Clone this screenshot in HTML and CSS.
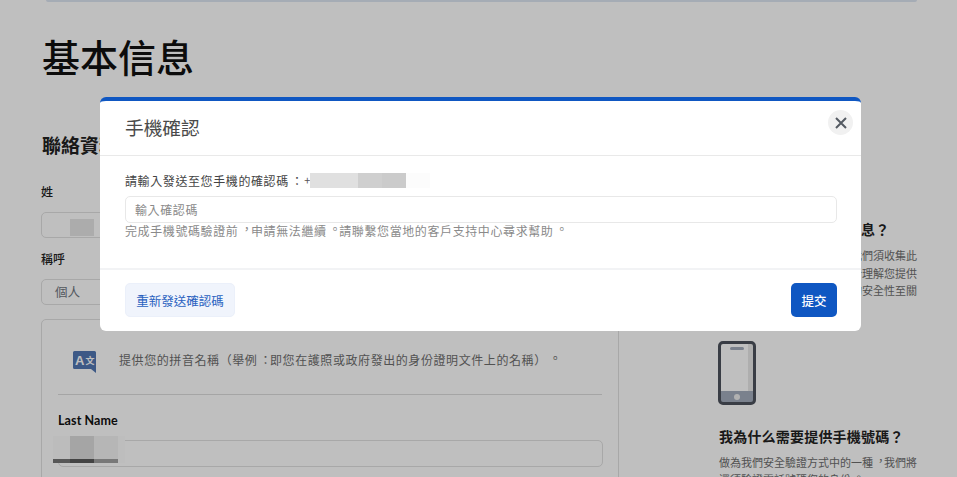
FILE: index.html
```html
<!DOCTYPE html>
<html lang="zh-TW">
<head>
<meta charset="utf-8">
<title>基本信息</title>
<link rel="stylesheet" href="styles.css">
</head>
<body>
<div class="page">
  <div class="topbar"></div>
  <h1 class="title">基本信息</h1>
  <div class="columns">
    <main class="form-col">
      <h2 class="section">聯絡資料</h2>
      <label class="label first">姓</label>
      <div class="field short"></div>
      <label class="label">稱呼</label>
      <div class="field short select">個人</div>
      <section class="card">
        <div class="notice">
          <svg class="translate" viewBox="0 0 23 23" width="23" height="23">
            <path class="translate-bg" d="M1.5 0H21.5A1.5 1.5 0 0 1 23 1.5V22L18 18H1.500A1.500 1.500 0 0 1 0 16.500V1.500A1.500 1.500 0 0 1 1.500 0Z"/>
            <text class="translate-a" x="2" y="13.500">A</text>
            <text class="translate-b" x="12.500" y="13">文</text>
          </svg>
          <p class="notice-text">提供您的拼音名稱（舉例<span class="pc">：</span>即您在護照或政府發出的身份證明文件上的名稱）<span class="pn">。</span></p>
        </div>
        <div class="name-block">
          <label class="name-label">Last Name</label>
          <div class="field name-input"></div>
        </div>
      </section>
    </main>
    <aside class="help-col">
      <h3 class="help-title">我為什么需要提供此信息？</h3>
      <p class="help-line first-line">為符合監管規定保障帳戶<span class="pn">，</span>我們須收集此</p>
      <p class="help-line">項個人信息<span class="pn">。</span>同時我們亦充分理解您提供</p>
      <p class="help-line">這些詳細信息對於您的帳戶的安全性至關</p>
      <svg class="phone" viewBox="0 0 38 64" width="38" height="64">
        <rect class="phone-screen" x="2" y="2" width="34" height="60" rx="2"/>
        <rect class="phone-shade" x="30" y="2" width="6" height="50"/>
        <rect class="phone-base" x="2" y="50" width="34" height="12"/>
        <circle class="phone-dot" cx="19" cy="56" r="3"/>
        <rect class="phone-speaker" x="12" y="6" width="14" height="3" rx="1.500"/>
        <rect class="phone-frame" x="1.500" y="1.500" width="35" height="61" rx="3.500"/>
      </svg>
      <h3 class="help-title second-help">我為什么需要提供手機號碼？</h3>
      <p class="help-line lead">做為我們安全驗證方式中的一種<span class="pn">，</span>我們將</p>
      <p class="help-line">還須驗證電話號碼您的身份<span class="pn">。</span></p>
    </aside>
  </div>
  <div class="blur-first"></div>
  <div class="blur-name">
    <span class="bn bn-a"></span><span class="bn bn-b"></span><span class="bn bn-c"></span><span class="bn bn-d"></span>
  </div>
</div>
<div class="overlay">
  <div class="modal">
    <header class="modal-head">
      <h2 class="modal-title">手機確認</h2>
      <button class="close" aria-label="關閉">
        <svg viewBox="0 0 12 12" width="12" height="12"><path d="M1 1L11 11M11 1L1 11"/></svg>
      </button>
    </header>
    <div class="modal-body">
      <div class="prompt"><span>請輸入發送至您手機的確認碼<span class="pc">：</span></span><span class="plus">+</span><span class="mask"><i class="m1"></i><i class="m2"></i><i class="m3"></i><i class="m4"></i></span></div>
      <input class="code" type="text" placeholder="輸入確認碼">
      <p class="hint">完成手機號碼驗證前<span class="pn">，</span>申請無法繼續<span class="pn">。</span>請聯繫您當地的客戶支持中心尋求幫助<span class="pn">。</span></p>
    </div>
    <footer class="modal-foot">
      <button class="btn resend">重新發送確認碼</button>
      <button class="btn submit">提交</button>
    </footer>
  </div>
</div>
</body>
</html>
```
FILE: styles.css
```css
* { box-sizing: border-box; }
html, body { margin: 0; height: 477px; overflow: hidden; background: #fff; }
body { font-family: "Noto Sans CJK TC", "Noto Sans", sans-serif; color: #222; position: relative; text-spacing-trim: space-all; }
h1, h2, h3, p { margin: 0; }
.pn { display: inline-block; transform: translate(.2em, -.14em); }
.pc { display: inline-block; transform: translateX(.18em); }

.page { height: 477px; overflow: hidden; position: relative; }
.topbar { height: 2px; margin: 0 40px 0 46px; background: #dde6f2; border-radius: 0 0 6px 6px; }
.title { margin: 32px 0 0 42px; font-size: 38px; line-height: 44px; font-weight: 500; color: #111; }
.columns { display: grid; grid-template-columns: 578px 199px; column-gap: 100px; margin: 54px 0 0 41px; }
.section { font-size: 19px; line-height: 26px; font-weight: 700; color: #222; margin-left: 1px; }
.label { display: block; font-size: 12px; line-height: 18px; font-weight: 500; color: #222; margin: 12px 0 11px; }
.label.first { margin-top: 25px; margin-bottom: 11px; }
.field { border: 1px solid #e0e0e0; border-radius: 5px; height: 26px; }
.short { width: 400px; }
.select { font-size: 12.500px; line-height: 24px; padding-left: 13px; color: #6f7680; }
.card { margin-top: 14px; border: 1px solid #e0e0e0; border-radius: 5px; height: 300px; padding: 0 16px; }
.notice { display: flex; align-items: flex-start; gap: 23px; height: 75px; padding: 31px 0 0 15px; border-bottom: 1px solid #dcdcdc; }
.translate { flex: none; }
.translate-bg { fill: #5277b3; }
.translate-a { font: 700 13px "Liberation Sans", sans-serif; fill: #fff; }
.translate-b { font: 700 9px "Noto Sans CJK TC", sans-serif; fill: #fff; }
.notice-text { font-size: 12px; line-height: 17px; letter-spacing: .58px; color: #6e6e6e; white-space: nowrap; }
.name-block { padding-top: 16px; }
.name-label { display: block; font-family: "Lato", sans-serif; font-size: 12.500px; line-height: 20px; font-weight: 700; color: #111; letter-spacing: .1px; }
.name-input { width: 545px; height: 27px; margin-top: 9px; }

.help-col { padding-top: 88px; }
.help-title { font-size: 14px; line-height: 18px; font-weight: 700; letter-spacing: .2px; color: #222; white-space: nowrap; }
.second-help { margin-top: 22px; }
.help-line { font-size: 11px; line-height: 17.500px; color: #6e6e6e; white-space: nowrap; }
.first-line { margin-top: 9px; }
.lead { margin-top: 9px; }
.phone { display: block; margin-top: 41px; margin-left: -1px; }
.phone-screen { fill: #fff; }
.phone-shade { fill: #e9e9e9; }
.phone-base { fill: #a3acbd; }
.phone-dot { fill: #ededed; }
.phone-speaker { fill: #a3acbd; }
.phone-frame { fill: none; stroke: #4d525c; stroke-width: 3; }

.blur-first { position: absolute; left: 70px; top: 219px; width: 24px; height: 17px; background: #e6e6e6; }
.blur-name { position: absolute; left: 53px; top: 436px; display: flex; height: 27px; }
.bn { display: block; height: 27px; border-bottom: 4px solid #747474; }
.bn-a { width: 17px; background: #fbfbfb; }
.bn-b { width: 24px; background: #dddddd; border-color: #5a5a5a; }
.bn-c { width: 24px; background: #f3f3f3; border-color: #a0a0a0; }
.bn-d { width: 7px; background: #fdfdfd; border-color: transparent; }

.overlay { position: absolute; inset: 0; background: rgba(0,0,0,.25); padding: 97px 0 0 100px; }
.modal { width: 761px; height: 234px; background: #fff; border-radius: 6px; border-top: 4px solid #0f57c2; display: flex; flex-direction: column; }
.modal-head { height: 55px; flex: none; border-bottom: 1px solid #e9e9e9; display: flex; align-items: flex-start; justify-content: space-between; padding: 9px 8px 0 25px; }
.modal-title { font-size: 18.700px; line-height: 26px; font-weight: 400; color: #4a4a4a; margin-top: 4px; }
.close { width: 25px; height: 25px; border: 0; border-radius: 50%; background: #f1f1f1; padding: 0; display: flex; align-items: center; justify-content: center; }
.close path { stroke: #555b63; stroke-width: 2; fill: none; }
.modal-body { flex: 1; padding: 15px 24px 0 25px; }
.prompt { display: flex; align-items: center; height: 18px; font-size: 12px; letter-spacing: .6px; color: #444; white-space: nowrap; }
.plus { width: 9px; text-align: right; color: #555; font-size: 11px; letter-spacing: 0; flex: none; }
.mask { display: flex; height: 15px; flex: none; }
.mask i { display: block; height: 15px; }
.m1 { width: 48px; background: #e0e0e0; }
.m2 { width: 24px; background: #cfcfcf; }
.m3 { width: 24px; background: #cbcbcb; }
.m4 { width: 24px; background: #fcfcfc; }
.code { display: block; width: 712px; height: 27px; margin-top: 7px; border: 1px solid #e8e8e8; border-radius: 5px; padding: 0 9px; font: 12px "Noto Sans CJK TC", sans-serif; letter-spacing: .6px; outline: none; }
.code::placeholder { color: #8a8a8a; opacity: 1; }
.hint { font-size: 12px; line-height: 16px; letter-spacing: .6px; color: #8a8a8a; white-space: nowrap; }
.modal-foot { flex: none; height: 63px; border-top: 2px solid #f2f3f5; display: flex; align-items: flex-start; justify-content: space-between; padding: 13px 24px 0 25px; }
.btn { height: 34px; border: 0; border-radius: 5px; font-family: inherit; font-size: 12.500px; padding: 0; }
.resend { width: 110px; background: #f0f4fc; color: #2a62c0; border: 1px solid #ebf0fa; }
.submit { width: 46px; background: #0f57c2; color: #fff; font-weight: 500; }
```
